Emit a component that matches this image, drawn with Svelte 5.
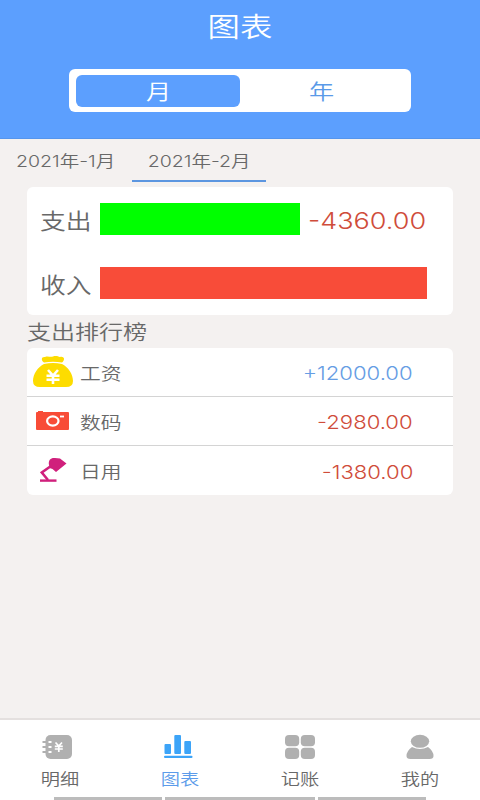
<script>
  const months = [
    { label: '2021年-1月', active: false },
    { label: '2021年-2月', active: true }
  ];
  const rows = [
    { icon: 'bag', name: '工资', amount: '+12000.00', income: true },
    { icon: 'camera', name: '数码', amount: '-2980.00', income: false },
    { icon: 'lamp', name: '日用', amount: '-1380.00', income: false }
  ];
  const nav = [
    { icon: 'detail', label: '明细' },
    { icon: 'chart', label: '图表', active: true },
    { icon: 'grid', label: '记账' },
    { icon: 'user', label: '我的' }
  ];
</script>

<div class="screen">
  <header>
    <h1><span class="wide">图表</span></h1>
    <div class="switch">
      <div class="seg on"><span class="wide">月</span></div>
      <div class="seg"><span class="wide">年</span></div>
    </div>
  </header>

  <div class="months">
    {#each months as m}
      <div class="month" class:active={m.active}><span class="wide">{m.label}</span></div>
    {/each}
  </div>

  <section class="card totals">
    <div class="total">
      <span class="label wide">支出</span>
      <div class="bar out"></div>
      <span class="sum wide">-4360.00</span>
    </div>
    <div class="total">
      <span class="label wide">收入</span>
      <div class="bar in"></div>
    </div>
  </section>

  <h2><span class="wide">支出排行榜</span></h2>

  <section class="card list">
    {#each rows as r}
      <div class="row">
        <div class="icon">
          {#if r.icon === 'bag'}
            <svg width="42" height="34" viewBox="0 0 42 34">
              <path fill="#fddc00" d="M12 7.500C9 5.500 9 1.500 13 2C16 .5 18 2.500 21 1.500C24 .5 26 1.500 28 2C33 1 33 5.500 30 7.500Q21 6 12 7.500ZM12 9Q21 7.200 30 9C36 12 41 19 41 26Q41 32 34 32H8Q1 32 1 26C1 19 6 12 12 9Z" />
              <path fill="none" stroke="#fff" stroke-width="2.600" d="M16 15L21 20.500L26 15M14.500 20.800H27.500M14.500 24.800H27.500M21 19.500V29" />
            </svg>
          {:else if r.icon === 'camera'}
            <svg width="42" height="34" viewBox="0 0 42 34">
              <path fill="#f84c37" d="M5 8H6V7H11V8H36Q37 8 37 9V25Q37 26 36 26H5Q4 26 4 25V9Q4 8 5 8Z" />
              <ellipse cx="20.800" cy="17" rx="5.700" ry="4.600" fill="none" stroke="#fff" stroke-width="2.200" />
              <path stroke="#fff" stroke-width="1.800" d="M28 12.500H32" />
            </svg>
          {:else}
            <svg width="42" height="34" viewBox="0 0 42 34">
              <path fill="#d0207c" d="M17 11C16 6 19 3.500 23 4L28 4.500L34.500 9.500L24 18L20.500 15L17.500 14Z" />
              <path fill="none" stroke="#d0207c" stroke-width="2.600" d="M19 12L9.800 18.500L16 26" />
              <path stroke="#d0207c" stroke-width="2.400" d="M8 26.600H24.500" />
            </svg>
          {/if}
        </div>
        <span class="name wide">{r.name}</span>
        <span class="amount wide" class:income={r.income}>{r.amount}</span>
      </div>
    {/each}
  </section>

  <nav>
    {#each nav as n}
      <div class="item" class:active={n.active}>
        <svg width="32" height="26" viewBox="0 0 32 26" fill="#b0b0b0">
          {#if n.icon === 'detail'}
            <rect x="1.500" y="1" width="26.500" height="24" rx="5" />
            <path stroke="#b0b0b0" stroke-width="2" d="M-1.500 8H3M-1.500 13H3M-1.500 18H3" />
            <path stroke="#fff" stroke-width="2" d="M4.500 8H7.500M4.500 13H7.500M4.500 18H7.500" />
            <path fill="none" stroke="#fff" stroke-width="1.700" d="M11.500 8.500L14.800 12L18 8.500M10.800 12.300H18.800M10.800 15H18.800M14.800 12V18" />
          {:else if n.icon === 'chart'}
            <g fill="#3ca4f8">
              <rect x="0.500" y="10" width="6.500" height="10" rx="1" />
              <rect x="10.300" y="1" width="6.700" height="19" rx="1" />
              <rect x="20.300" y="7" width="6.700" height="13" rx="1" />
              <rect x="0" y="21.800" width="28.500" height="2.200" rx="1" />
            </g>
          {:else if n.icon === 'grid'}
            <rect x="1" y="1" width="14.200" height="11.300" rx="4" />
            <rect x="16.800" y="1" width="14.200" height="11.300" rx="4" />
            <rect x="1" y="13.700" width="14.200" height="11.300" rx="4" />
            <rect x="16.800" y="13.700" width="14.200" height="11.300" rx="4" />
          {:else}
            <ellipse cx="16" cy="7.300" rx="9.200" ry="6.500" />
            <path d="M8 13Q16 17 24 13Q29.500 17 29.500 22Q29.500 25 25.500 25H6.500Q2.500 25 2.500 22Q2.500 17 8 13Z" />
          {/if}
        </svg>
        <span class="wide">{n.label}</span>
      </div>
    {/each}
    <div class="strips"><b></b><b></b><b></b></div>
  </nav>
</div>

<style>
  :global(body) { margin: 0; }
  * { box-sizing: border-box; }
  .screen {
    width: 480px;
    height: 800px;
    overflow: hidden;
    display: flex;
    flex-direction: column;
    background: #f4f1f0;
    color: #686868;
    font-family: Inter, "Noto Sans CJK SC", sans-serif;
    font-weight: 350;
    white-space: nowrap;
  }
  .wide { display: inline-block; transform: scaleX(1.2); }
  header {
    height: 139px;
    flex: none;
    display: flex;
    flex-direction: column;
    align-items: center;
    background: #5c9ffe;
    border-bottom: 1px solid #5595ed;
  }
  h1 { margin: 0; height: 69px; padding-top: 8px; font-size: 27px; line-height: 40px; font-weight: 350; color: #fff; }
  .switch {
    width: 342px;
    height: 43px;
    display: flex;
    padding: 6px 9px 5px 7px;
    border-radius: 6px;
    background: #fff;
  }
  .seg { flex: 1; border-radius: 6px; text-align: center; font-size: 21px; line-height: 33px; color: #5a9ae8; }
  .seg.on { flex: 0 0 164px; background: #5c9ffe; color: #fff; }
  .months { display: flex; height: 48px; flex: none; }
  .month { width: 132px; height: 43px; text-align: center; font-size: 16px; line-height: 44px; }
  .month .wide { transform: scaleX(1.22); }
  .month.active { width: 134px; border-bottom: 2px solid #5c96e0; }
  .card { margin: 0 27px; background: #fff; border-radius: 6px; flex: none; }
  .totals { height: 128px; display: flex; flex-direction: column; }
  .total { height: 64px; display: flex; align-items: center; padding-left: 13px; }
  .label { width: 60px; font-size: 21.500px; transform-origin: left; }
  .bar { height: 32px; }
  .out { width: 200px; background: #0f0; }
  .in { width: 327px; background: #f84c39; }
  .sum { margin-left: 8px; padding-top: 3px; font-size: 22.500px; transform-origin: left; color: #cf4c3a; }
  h2 { margin: 0 27px; height: 33px; font-size: 20px; line-height: 36px; font-weight: 350; }
  h2 .wide { transform-origin: left; }
  .list { height: 147px; }
  .row { height: 49px; display: flex; align-items: center; padding: 0 40px 0 5px; border-bottom: 1px solid #d4d4d4; }
  .row:last-child { border: 0; }
  .icon { width: 48px; display: flex; }
  .name { font-size: 17.300px; transform-origin: left; }
  .amount { margin-left: auto; padding-top: 2px; font-size: 18.400px; transform-origin: right; color: #cf4c3a; }
  .income { color: #669de4; }
  nav {
    height: 82px;
    margin-top: auto;
    position: relative;
    display: flex;
    flex: none;
    background: #fff;
    border-top: 2px solid #e4e0df;
  }
  .item { width: 120px; display: flex; flex-direction: column; align-items: center; padding-top: 14px; font-size: 16px; line-height: 24px; }
  .item svg { margin-bottom: 7px; overflow: visible; }
  .active { color: #5b9bea; }
  .month.active { color: #686868; }
  .strips { position: absolute; left: 54px; bottom: 0; display: flex; gap: 3px; }
  .strips b { height: 3px; width: 108px; background: #bcbcbc; }
  .strips b:nth-child(2) { width: 150px; }
</style>
